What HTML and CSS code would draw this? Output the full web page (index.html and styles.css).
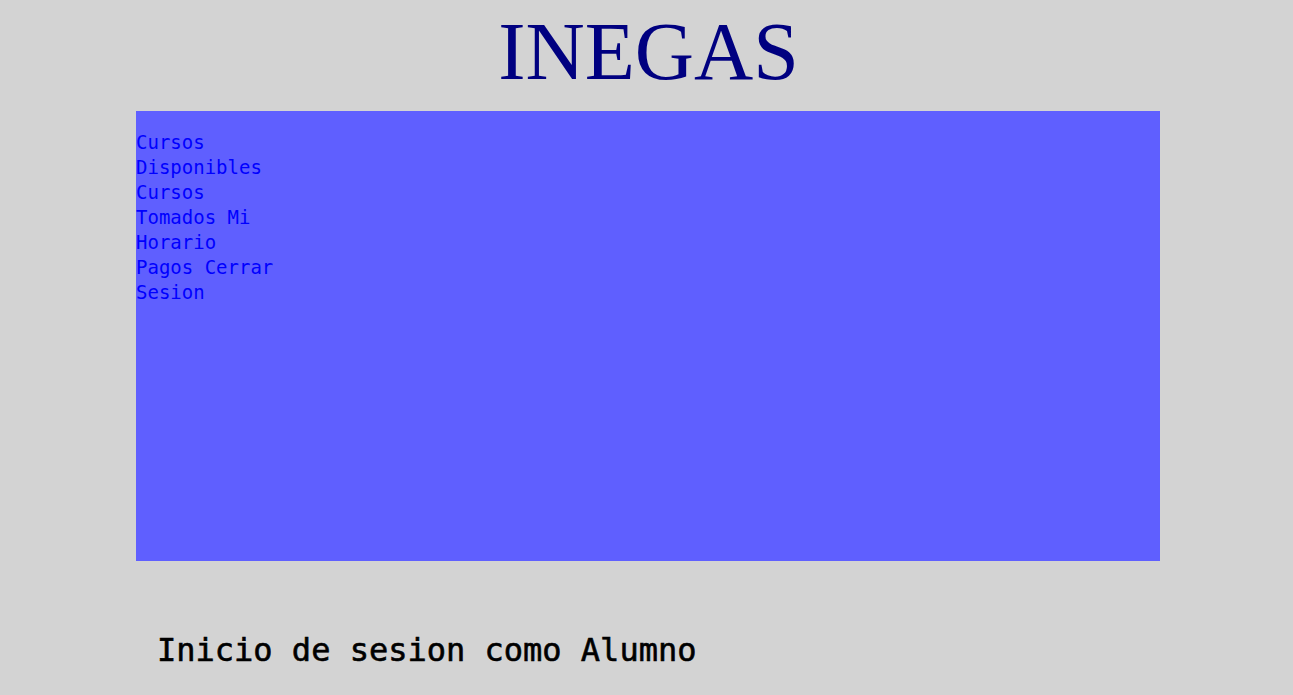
FILE: index.html
```html
<!DOCTYPE html>
<html lang="es">
<head>
<meta charset="utf-8">
<title>INEGAS</title>
<link rel="stylesheet" href="styles.css">
</head>
<body>
<header class="header">
  <h1 class="title">INEGAS</h1>
</header>
<main class="panel">
  <nav class="menu">
    <a class="menu-link" href="#"><span class="word">Cursos</span> <span class="word">Disponibles</span></a>
    <a class="menu-link" href="#"><span class="word">Cursos</span> <span class="word">Tomados</span></a>
    <a class="menu-link" href="#"><span class="word">Mi</span> <span class="word">Horario</span></a>
    <a class="menu-link" href="#"><span class="word">Pagos</span></a>
    <a class="menu-link" href="#"><span class="word">Cerrar</span> <span class="word">Sesion</span></a>
  </nav>
</main>
<footer class="footer">
  <h2 class="status">Inicio de sesion como Alumno</h2>
</footer>
</body>
</html>
```
FILE: styles.css
```css
html, body {
  margin: 0;
  padding: 0;
}
body {
  background: #d3d3d3;
  min-height: 695px;
  font-family: "DejaVu Sans Mono", "Liberation Mono", monospace;
}
.header {
  padding-top: 11px;
  padding-left: 4px;
  margin-bottom: 18px;
}
.title {
  margin: 0;
  height: 82px;
  font-family: "Liberation Serif", "Times New Roman", serif;
  font-weight: normal;
  font-size: 82px;
  line-height: 82px;
  color: #000080;
  text-align: center;
}
.panel {
  margin-left: 136px;
  width: 1024px;
  height: 450px;
  background: #5f5fff;
  box-sizing: border-box;
  padding-top: 19px;
}
.menu {
  width: 142px;
  font-size: 19px;
  line-height: 25px;
}
.menu-link {
  color: #0000ff;
  text-decoration: none;
}
.word {
  display: inline-block;
}
.footer {
  padding-top: 69px;
  padding-left: 157px;
}
.status {
  margin: 0;
  font-size: 32px;
  line-height: 40px;
  font-weight: normal;
  color: #000;
  -webkit-text-stroke: 0.6px #000;
}
```
